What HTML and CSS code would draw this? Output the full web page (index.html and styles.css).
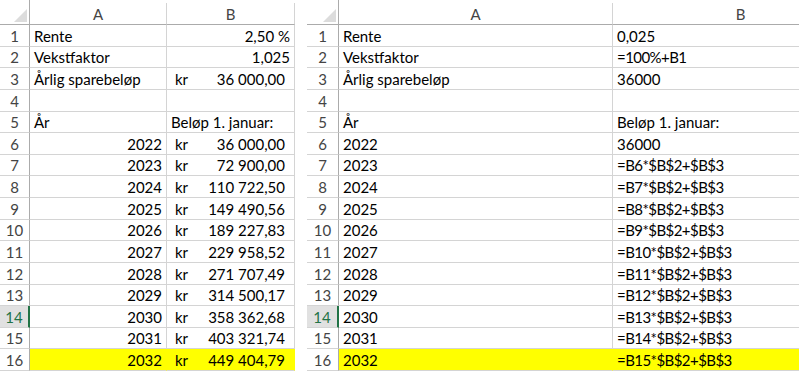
FILE: index.html
```html
<!DOCTYPE html>
<html>
<head>
<meta charset="utf-8">
<link rel="stylesheet" href="styles.css">
</head>
<body>
<div class="page">
  <div class="sheet left">
    <div class="corner"><span class="tri"></span></div>
    <div class="colhead">A</div>
    <div class="colhead">B</div>

    <div class="rowhead">1</div><div class="cell">Rente</div><div class="cell right">2,50 %</div>
    <div class="rowhead">2</div><div class="cell">Vekstfaktor</div><div class="cell right">1,025</div>
    <div class="rowhead">3</div><div class="cell">Årlig sparebeløp</div><div class="cell acc"><span>kr</span><span>36 000,00</span></div>
    <div class="rowhead">4</div><div class="cell"></div><div class="cell"></div>
    <div class="rowhead">5</div><div class="cell">År</div><div class="cell">Beløp 1. januar:</div>
    <div class="rowhead">6</div><div class="cell right">2022</div><div class="cell acc"><span>kr</span><span>36 000,00</span></div>
    <div class="rowhead">7</div><div class="cell right">2023</div><div class="cell acc"><span>kr</span><span>72 900,00</span></div>
    <div class="rowhead">8</div><div class="cell right">2024</div><div class="cell acc"><span>kr</span><span>110 722,50</span></div>
    <div class="rowhead">9</div><div class="cell right">2025</div><div class="cell acc"><span>kr</span><span>149 490,56</span></div>
    <div class="rowhead">10</div><div class="cell right">2026</div><div class="cell acc"><span>kr</span><span>189 227,83</span></div>
    <div class="rowhead">11</div><div class="cell right">2027</div><div class="cell acc"><span>kr</span><span>229 958,52</span></div>
    <div class="rowhead">12</div><div class="cell right">2028</div><div class="cell acc"><span>kr</span><span>271 707,49</span></div>
    <div class="rowhead">13</div><div class="cell right">2029</div><div class="cell acc"><span>kr</span><span>314 500,17</span></div>
    <div class="rowhead sel">14</div><div class="cell right">2030</div><div class="cell acc"><span>kr</span><span>358 362,68</span></div>
    <div class="rowhead">15</div><div class="cell right">2031</div><div class="cell acc"><span>kr</span><span>403 321,74</span></div>
    <div class="rowhead">16</div><div class="cell right hl">2032</div><div class="cell acc hl"><span>kr</span><span>449 404,79</span></div>
  </div>

  <div class="sheet right-sheet">
    <div class="corner"><span class="tri"></span></div>
    <div class="colhead">A</div>
    <div class="colhead">B</div>

    <div class="rowhead">1</div><div class="cell">Rente</div><div class="cell">0,025</div>
    <div class="rowhead">2</div><div class="cell">Vekstfaktor</div><div class="cell f">=100%+B1</div>
    <div class="rowhead">3</div><div class="cell">Årlig sparebeløp</div><div class="cell">36000</div>
    <div class="rowhead">4</div><div class="cell"></div><div class="cell"></div>
    <div class="rowhead">5</div><div class="cell">År</div><div class="cell">Beløp 1. januar:</div>
    <div class="rowhead">6</div><div class="cell">2022</div><div class="cell">36000</div>
    <div class="rowhead">7</div><div class="cell">2023</div><div class="cell f">=B6*$B$2+$B$3</div>
    <div class="rowhead">8</div><div class="cell">2024</div><div class="cell f">=B7*$B$2+$B$3</div>
    <div class="rowhead">9</div><div class="cell">2025</div><div class="cell f">=B8*$B$2+$B$3</div>
    <div class="rowhead">10</div><div class="cell">2026</div><div class="cell f">=B9*$B$2+$B$3</div>
    <div class="rowhead">11</div><div class="cell">2027</div><div class="cell f">=B10*$B$2+$B$3</div>
    <div class="rowhead">12</div><div class="cell">2028</div><div class="cell f">=B11*$B$2+$B$3</div>
    <div class="rowhead">13</div><div class="cell">2029</div><div class="cell f">=B12*$B$2+$B$3</div>
    <div class="rowhead sel">14</div><div class="cell">2030</div><div class="cell f">=B13*$B$2+$B$3</div>
    <div class="rowhead">15</div><div class="cell">2031</div><div class="cell f">=B14*$B$2+$B$3</div>
    <div class="rowhead">16</div><div class="cell hl">2032</div><div class="cell hl f">=B15*$B$2+$B$3</div>
  </div>
</div>
</body>
</html>
```

FILE: styles.css
```css
html, body {
  margin: 0;
  padding: 0;
  background: #ffffff;
  overflow: hidden;
}

.page {
  display: flex;
  gap: 12px;
  width: 799px;
  height: 376px;
  overflow: hidden;
  font-family: Lato, "Open Sans", sans-serif;
  font-size: 15px;
  color: #000000;
}

.sheet {
  display: grid;
  grid-template-rows: 25px repeat(16, 21.625px);
  flex: none;
}

.left {
  grid-template-columns: 30px 137px 128px;
  width: 295px;
}

.right-sheet {
  grid-template-columns: 32px 274px 256px;
  width: 562px;
}

.corner {
  position: relative;
  border-bottom: 1px solid #ababab;
  border-right: 1px solid #ababab;
  box-sizing: border-box;
}

.tri {
  position: absolute;
  right: 2px;
  bottom: 2px;
  width: 0;
  height: 0;
  border-style: solid;
  border-width: 0 0 13px 13px;
  border-color: transparent transparent #dcdcdc transparent;
}

.colhead {
  box-sizing: border-box;
  border-bottom: 1px solid #ababab;
  border-right: 1px solid #d4d4d4;
  margin-top: 3px;
  display: flex;
  align-items: flex-end;
  justify-content: center;
  color: #444444;
  line-height: 18px;
  padding-bottom: 1px;
}

.rowhead {
  box-sizing: border-box;
  border-bottom: 1px solid #d4d4d4;
  border-right: 1px solid #ababab;
  display: flex;
  align-items: flex-end;
  justify-content: center;
  color: #444444;
  line-height: 18px;
  padding-bottom: 1px;
}

.rowhead.sel {
  background: #e1e1e1;
  color: #217346;
  border-right: 2px solid #217346;
}

.cell {
  box-sizing: border-box;
  border-bottom: 1px solid #d4d4d4;
  border-right: 1px solid #d4d4d4;
  display: flex;
  align-items: flex-end;
  line-height: 18px;
  padding: 0 4px 1px 4px;
  white-space: nowrap;
  overflow: hidden;
}

.cell.f {
  letter-spacing: -0.55px;
}

.cell.right {
  justify-content: flex-end;
}

.cell.acc {
  justify-content: space-between;
  padding: 0 9px 1px 8px;
}

.cell.hl {
  background: #ffff00;
  border-right-color: #ffff00;
}
```
